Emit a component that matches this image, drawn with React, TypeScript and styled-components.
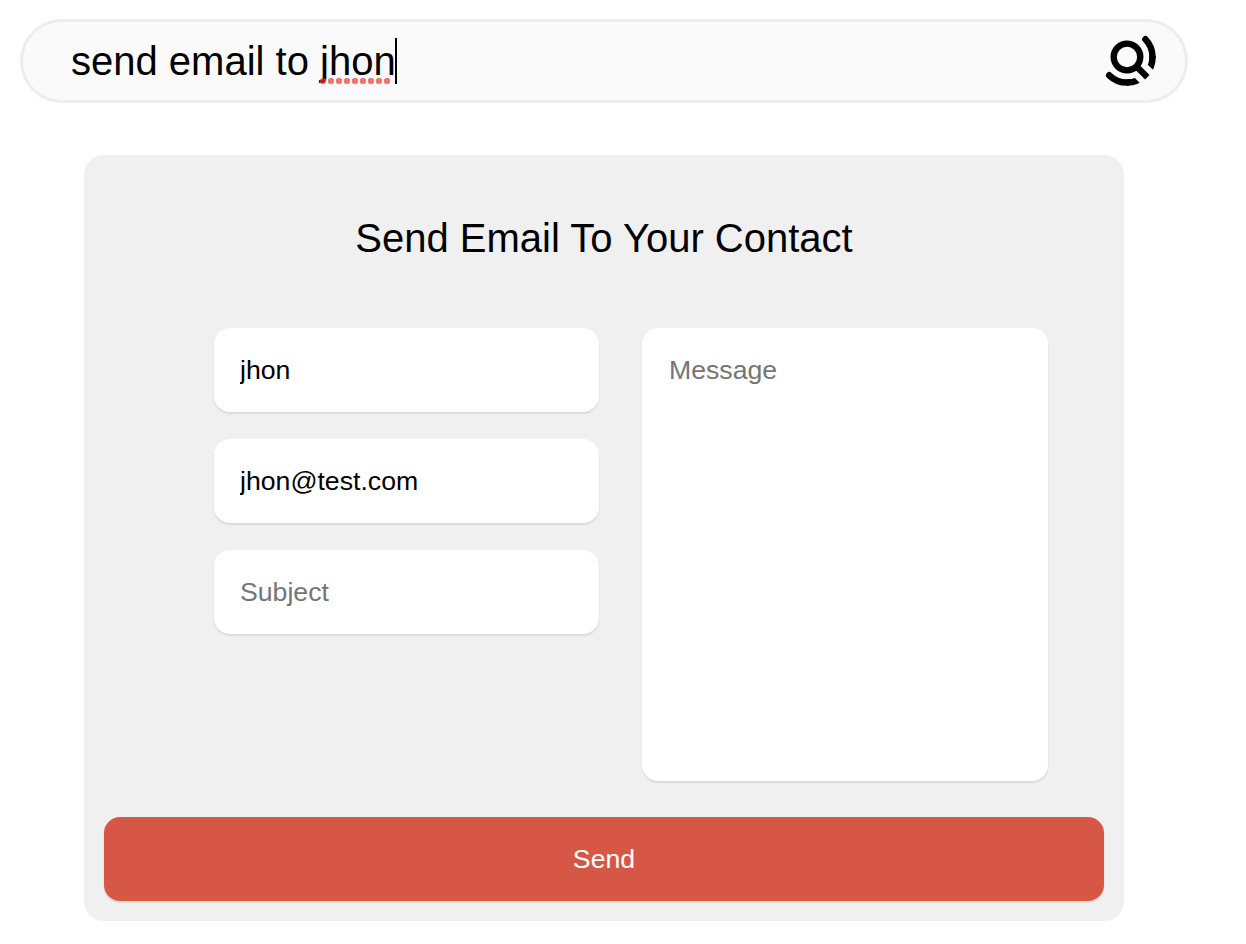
import React from "react";
import styled, { createGlobalStyle, css } from "styled-components";

const GlobalStyle = createGlobalStyle`
  *, *::before, *::after { box-sizing: border-box; }
  body {
    margin: 0;
    background: #fff;
    color: #000;
    font-family: "Liberation Sans", Helvetica, Arial, sans-serif;
  }
`;

const Page = styled.main`
  width: 1208px;
  height: 944px;
  padding: 19px 20px 0;
  display: flex;
  flex-direction: column;
  align-items: center;
  gap: 52px;
`;

const SearchBar = styled.div`
  width: 1168px;
  height: 84px;
  flex: none;
  padding: 0 28px 0 48px;
  display: flex;
  align-items: center;
  justify-content: space-between;
  background: #fafafa;
  border: 3px solid #ededed;
  border-radius: 42px;
`;

const Query = styled.div`
  display: flex;
  align-items: center;
  font-size: 40px;
  line-height: 46px;
  white-space: pre;
`;

const Misspelled = styled.span`
  position: relative;

  &::after {
    content: "";
    position: absolute;
    left: 0;
    top: 40px;
    width: 72px;
    height: 6px;
    background: radial-gradient(circle at 3px 3px, #ef3a2c 2.9px, transparent 3.5px) 0 0 / 8px 6px;
    opacity: 0.68;
  }
`;

const Caret = styled.span`
  width: 2px;
  height: 46px;
  margin-left: -1px;
  background: #000;
`;

const Logo = styled.svg`
  width: 60px;
  height: 60px;
  margin-bottom: 8px;
  flex: none;
`;

const Panel = styled.form`
  width: 1040px;
  height: 766px;
  flex: none;
  padding: 60px 20px 20px;
  display: flex;
  flex-direction: column;
  background: #f0f0f0;
  border-radius: 20px;
`;

const Title = styled.h1`
  margin: 0 0 67px;
  font-size: 40px;
  font-weight: 400;
  line-height: 46px;
  text-align: center;
`;

const Fields = styled.div`
  display: grid;
  grid-template-columns: 385px 406px;
  column-gap: 43px;
  padding-left: 110px;
  margin-bottom: 36px;
`;

const FieldColumn = styled.div`
  display: flex;
  flex-direction: column;
  gap: 27px;
`;

const control = css`
  display: block;
  width: 100%;
  margin: 0;
  border: 0;
  border-radius: 16px;
  outline: none;
  font-family: inherit;
  font-size: 26.667px;
  line-height: 30px;
  box-shadow: 0 2px 2px rgba(0, 0, 0, 0.08), 0 1px 2px rgba(0, 0, 0, 0.03);
`;

const TextField = styled.input`
  ${control}
  height: 84px;
  padding: 0 26px;
  background: #fff;
  color: #000;
  &::placeholder { color: #757575; }
`;

const MessageField = styled.textarea`
  ${control}
  height: 453px;
  padding: 27px 26px 27px 27px;
  resize: none;
  background: #fff;
  color: #000;
  &::placeholder { color: #757575; }
`;

const SendButton = styled.button`
  ${control}
  height: 84px;
  padding: 0;
  background: #d65745;
  color: #fff;
`;

function SearchLogo() {
  return (
    <Logo viewBox="-30 -30 60 60" fill="none" stroke="#000" strokeWidth="6.5">
      <path d="M18.4 -17.7A25.5 25.5 0 0 1 25.5 0" strokeLinecap="round" />
      <path d="M25.5 -1A25.5 25.5 0 0 1 18 18A25.5 25.5 0 0 1 0 25.5" />
      <path d="M1 25.5A25.5 25.5 0 0 1 -17.8 18.3" strokeLinecap="round" />
      <path d="M10 10L30 30" stroke="#fafafa" strokeWidth="18.6" />
      <circle r="13.3" strokeWidth="6.3" />
      <path d="M9 9L20.3 20.3" strokeWidth="6.3" />
    </Logo>
  );
}

export default function App() {
  return (
    <>
      <GlobalStyle />
      <Page>
        <SearchBar>
          <Query>
            <span>send email to </span>
            <Misspelled>jhon</Misspelled>
            <Caret />
          </Query>
          <SearchLogo />
        </SearchBar>
        <Panel onSubmit={(event) => event.preventDefault()}>
          <Title>Send Email To Your Contact</Title>
          <Fields>
            <FieldColumn>
              <TextField defaultValue="jhon" />
              <TextField defaultValue="jhon@test.com" />
              <TextField placeholder="Subject" />
            </FieldColumn>
            <MessageField placeholder="Message" />
          </Fields>
          <SendButton type="submit">Send</SendButton>
        </Panel>
      </Page>
    </>
  );
}
